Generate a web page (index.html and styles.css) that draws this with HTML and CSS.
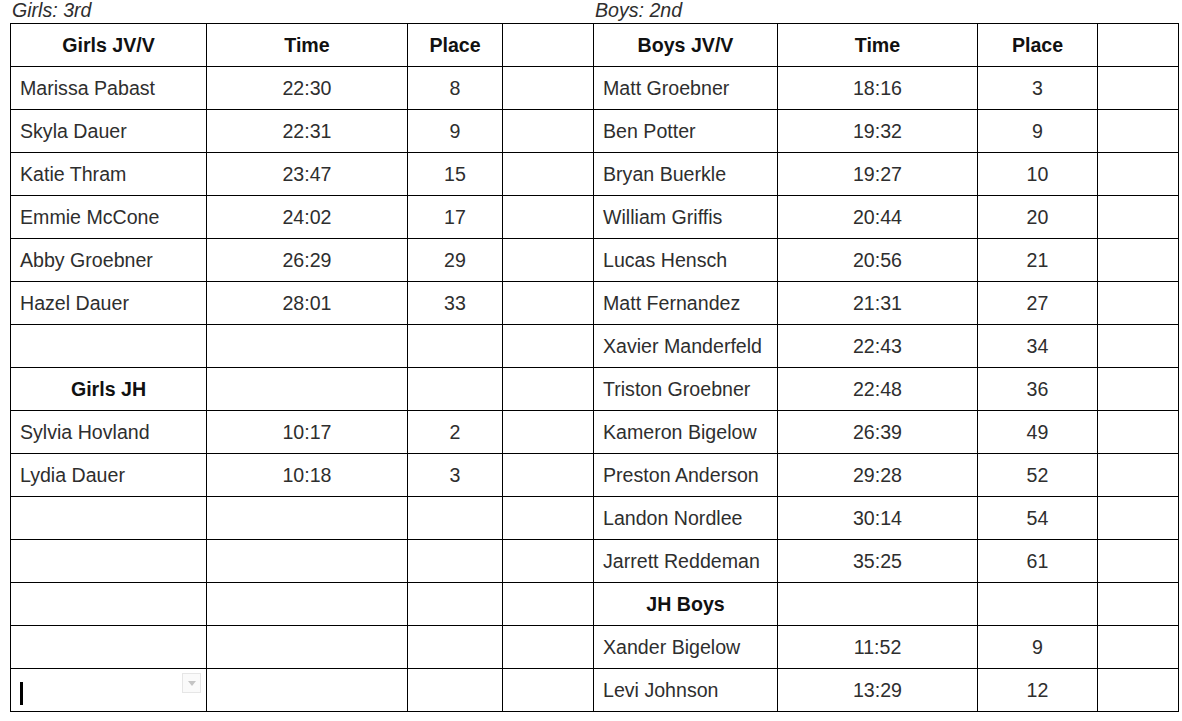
FILE: index.html
```html
<!DOCTYPE html>
<html>
<head>
<meta charset="utf-8">
<link rel="stylesheet" href="styles.css">
</head>
<body>
<div class="page">
  <div class="captions">
    <div class="cap cap-girls">Girls: 3rd</div>
    <div class="cap">Boys: 2nd</div>
  </div>
  <table class="results">
    <colgroup>
      <col class="c1"><col class="c2"><col class="c3"><col class="c4">
      <col class="c5"><col class="c6"><col class="c7"><col class="c8">
    </colgroup>
    <tr class="head">
      <td class="ctr">Girls JV/V</td><td class="ctr">Time</td><td class="ctr">Place</td><td></td>
      <td class="ctr">Boys JV/V</td><td class="ctr">Time</td><td class="ctr">Place</td><td></td>
    </tr>
    <tr><td>Marissa Pabast</td><td class="ctr">22:30</td><td class="ctr">8</td><td></td><td>Matt Groebner</td><td class="ctr">18:16</td><td class="ctr">3</td><td></td></tr>
    <tr><td>Skyla Dauer</td><td class="ctr">22:31</td><td class="ctr">9</td><td></td><td>Ben Potter</td><td class="ctr">19:32</td><td class="ctr">9</td><td></td></tr>
    <tr><td>Katie Thram</td><td class="ctr">23:47</td><td class="ctr">15</td><td></td><td>Bryan Buerkle</td><td class="ctr">19:27</td><td class="ctr">10</td><td></td></tr>
    <tr><td>Emmie McCone</td><td class="ctr">24:02</td><td class="ctr">17</td><td></td><td>William Griffis</td><td class="ctr">20:44</td><td class="ctr">20</td><td></td></tr>
    <tr><td>Abby Groebner</td><td class="ctr">26:29</td><td class="ctr">29</td><td></td><td>Lucas Hensch</td><td class="ctr">20:56</td><td class="ctr">21</td><td></td></tr>
    <tr><td>Hazel Dauer</td><td class="ctr">28:01</td><td class="ctr">33</td><td></td><td>Matt Fernandez</td><td class="ctr">21:31</td><td class="ctr">27</td><td></td></tr>
    <tr><td></td><td></td><td></td><td></td><td>Xavier Manderfeld</td><td class="ctr">22:43</td><td class="ctr">34</td><td></td></tr>
    <tr><td class="ctr bold">Girls JH</td><td></td><td></td><td></td><td>Triston Groebner</td><td class="ctr">22:48</td><td class="ctr">36</td><td></td></tr>
    <tr><td>Sylvia Hovland</td><td class="ctr">10:17</td><td class="ctr">2</td><td></td><td>Kameron Bigelow</td><td class="ctr">26:39</td><td class="ctr">49</td><td></td></tr>
    <tr><td>Lydia Dauer</td><td class="ctr">10:18</td><td class="ctr">3</td><td></td><td>Preston Anderson</td><td class="ctr">29:28</td><td class="ctr">52</td><td></td></tr>
    <tr><td></td><td></td><td></td><td></td><td>Landon Nordlee</td><td class="ctr">30:14</td><td class="ctr">54</td><td></td></tr>
    <tr><td></td><td></td><td></td><td></td><td>Jarrett Reddeman</td><td class="ctr">35:25</td><td class="ctr">61</td><td></td></tr>
    <tr><td></td><td></td><td></td><td></td><td class="ctr bold">JH Boys</td><td></td><td></td><td></td></tr>
    <tr><td></td><td></td><td></td><td></td><td>Xander Bigelow</td><td class="ctr">11:52</td><td class="ctr">9</td><td></td></tr>
    <tr>
      <td class="edit"><span class="cursor"></span><span class="dropdown"><svg width="8" height="5" viewBox="0 0 8 5"><path d="M0 0H8L4 5Z" fill="#c4c4c4"/></svg></span></td>
      <td></td><td></td><td></td><td>Levi Johnson</td><td class="ctr">13:29</td><td class="ctr">12</td><td></td>
    </tr>
  </table>
</div>
</body>
</html>
```

FILE: styles.css
```css
html, body {
  margin: 0;
  padding: 0;
  background: #ffffff;
}
body {
  font-family: "Liberation Sans", Arial, sans-serif;
  font-size: 19.6px;
  color: #2e2e2e;
}
.page {
  padding-left: 10px;
}
.captions {
  display: flex;
  height: 23px;
  align-items: flex-start;
}
.cap {
  font-style: italic;
  line-height: 20px;
}
.cap-girls {
  width: 585px;
  padding-left: 2px;
  box-sizing: border-box;
}
.results {
  border-collapse: collapse;
  table-layout: fixed;
  width: 1169px;
}
.c1 { width: 196px; }
.c2 { width: 201px; }
.c3 { width: 95px; }
.c4 { width: 91px; }
.c5 { width: 184px; }
.c6 { width: 200px; }
.c7 { width: 120px; }
.c8 { width: 81px; }
.results tr {
  height: 43px;
}
.results td {
  border: 1px solid #000;
  padding: 1px 0 0 9px;
  vertical-align: middle;
  white-space: nowrap;
  overflow: hidden;
}
.results td.ctr {
  text-align: center;
  padding: 1px 0 0 0;
}
.head td, .bold {
  font-weight: bold;
  color: #111;
}
.edit {
  position: relative;
}
.cursor {
  display: inline-block;
  width: 3px;
  height: 23px;
  background: #000;
  vertical-align: middle;
  margin-top: 6px;
}
.dropdown {
  position: absolute;
  right: 5px;
  top: 4px;
  width: 17px;
  height: 18px;
  border: 1px solid #e6e6e6;
  display: flex;
  align-items: center;
  justify-content: center;
  background: #fafafa;
}
```
